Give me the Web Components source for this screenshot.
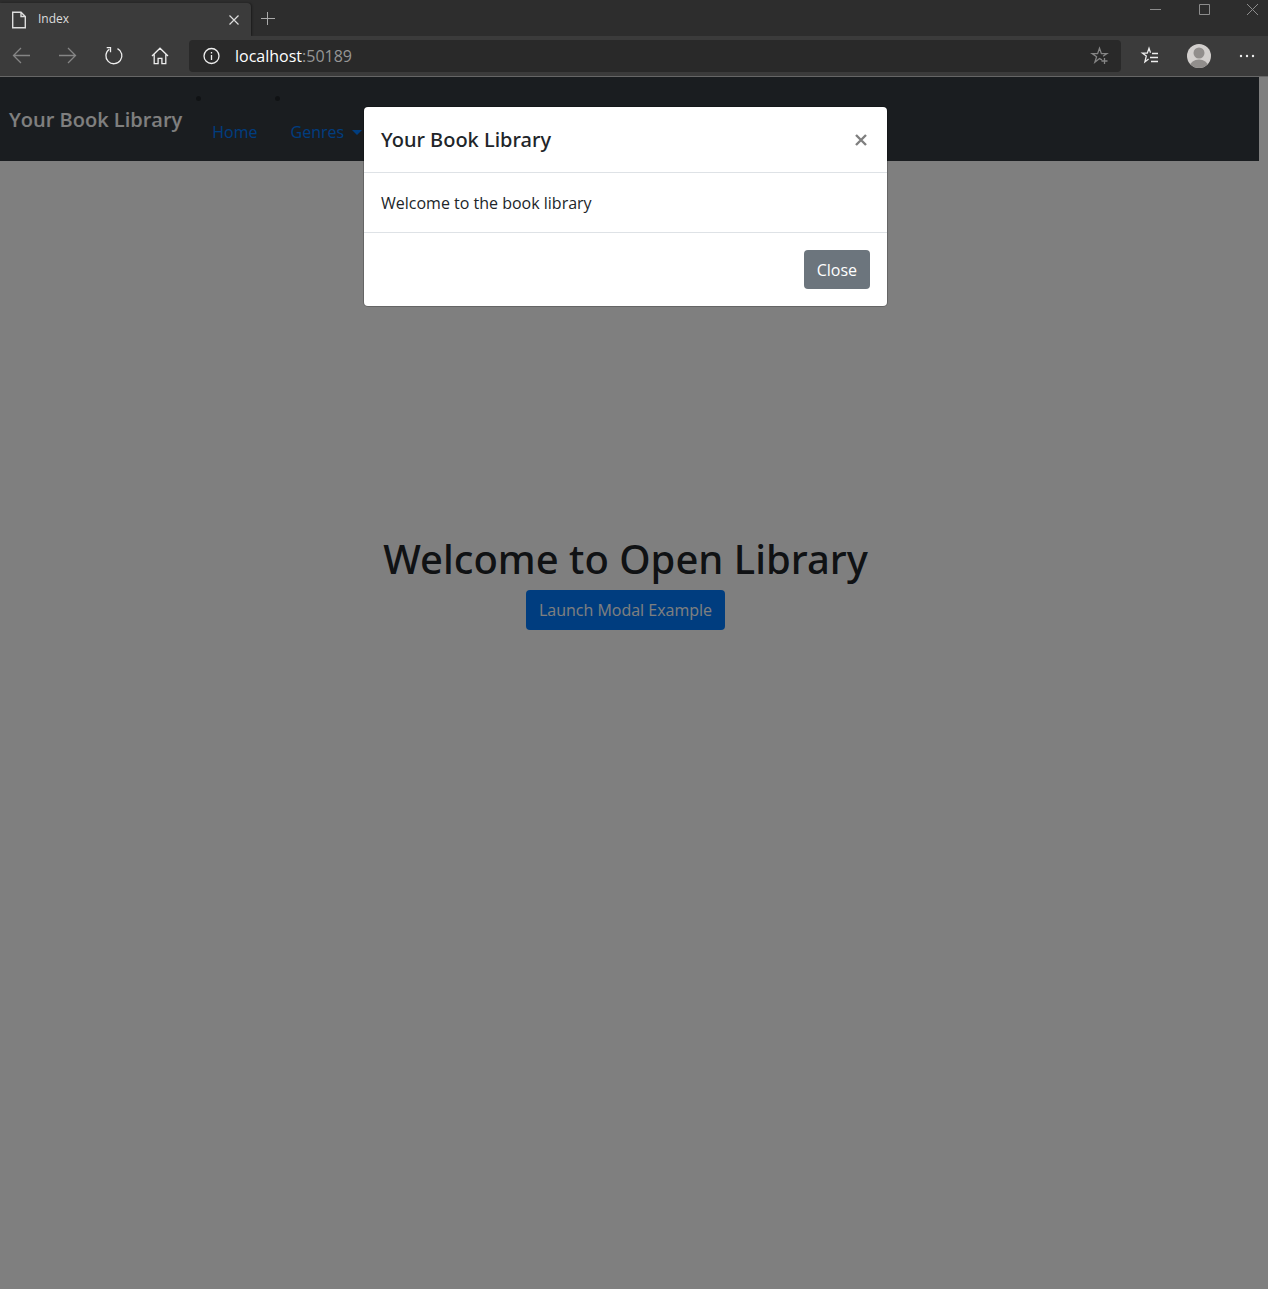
<!DOCTYPE html>
<html lang="en">
<head>
<meta charset="utf-8">
<title>Index</title>
<style>
html, body { height: 100%; margin: 0; }
body { font-family: "Open Sans", "Noto Sans", sans-serif; font-size: 16px; line-height: 25px; color: #212529; background: #fff; --heading: "Noto Sans", "Open Sans", sans-serif; }
</style>
</head>
<body>
<browser-window>
  <tab-strip slot="chrome"></tab-strip>
  <tool-bar slot="chrome"></tool-bar>
  <library-nav></library-nav>
  <library-welcome></library-welcome>
  <library-modal slot="overlay">
    <span slot="title">Your Book Library</span>
    Welcome to the book library
  </library-modal>
</browser-window>
<script>
const define = (name, html) => customElements.define(name, class extends HTMLElement {
  constructor() {
    super();
    this.attachShadow({ mode: "open" }).innerHTML = html;
  }
});

define("browser-window", `
<style>
:host { display: flex; flex-direction: column; min-height: 100%; }
.page { flex: 1; display: flex; flex-direction: column; position: relative; background: #fff; }
</style>
<slot name="chrome"></slot>
<div class="page"><slot></slot><slot name="overlay"></slot></div>`);

define("tab-strip", `
<style>
:host { display: flex; height: 36px; background: #2d2d2d; color: #ddd; font-size: 12px; line-height: 32px; }
button { border: 0; padding: 0; background: none; color: inherit; display: flex; align-items: center; justify-content: center; }
svg { display: block; fill: none; stroke: currentColor; }
.tab { display: flex; align-items: center; box-sizing: border-box; width: 251px; margin-top: 3px; padding: 0 10px 0 11px; background: #3b3b3b; border-radius: 0 4px 0 0; box-shadow: 1px 0 2px #1c1c1c; }
.tab span { flex: 1; margin-left: 11px; padding-bottom: 2px; }
.add { width: 33px; color: #aaa; }
.win { display: flex; margin-left: auto; gap: 36px; padding: 3px 9px 0 0; color: #8c8c8c; align-items: flex-start; }
</style>
<div class="tab">
  <svg width="16" height="18" viewBox="0 0 16 18" stroke="#eee" stroke-width="1.4"><path d="M1.7 1.2h8.3l4.3 4.3v11.3H1.7zM10 1.2v4.3h4.3"/></svg>
  <span>Index</span>
  <button aria-label="Close tab"><svg width="14" height="14" stroke-width="1.2"><path d="M2.5 2.5l9 9M11.5 2.5l-9 9"/></svg></button>
</div>
<button class="add" aria-label="New tab"><svg width="14" height="14"><path d="M0 7.500h14M6.500 1v13"/></svg></button>
<div class="win">
  <button aria-label="Minimize"><svg width="13" height="13"><path d="M2 6.500h11"/></svg></button>
  <button aria-label="Maximize"><svg width="13" height="13"><path d="M2.500 1.500h10v10h-10z"/></svg></button>
  <button aria-label="Close window"><svg width="13" height="13"><path d="M1 1l11 11M12 1L1 12"/></svg></button>
</div>`);

define("tool-bar", `
<style>
:host { display: flex; align-items: center; box-sizing: border-box; height: 41px; padding: 0 12px; background: #3b3b3b; border-bottom: 1px solid #666; color: #eee; }
button { border: 0; padding: 0; background: none; color: inherit; }
svg { display: block; fill: none; stroke: currentColor; stroke-width: 1.3; }
nav { display: flex; gap: 26px; margin-right: 19px; }
.dim { color: #858585; }
.address { flex: 1; display: flex; align-items: center; box-sizing: border-box; height: 32px; padding: 0 11px 0 13px; border-radius: 4px; background: #292929; }
.url { flex: 1; margin-left: 14px; color: #fff; }
.url span { color: #969696; }
.tools { display: flex; align-items: center; gap: 26px; margin-left: 19px; }
</style>
<nav aria-label="Browser">
  <button class="dim" aria-label="Back"><svg width="20" height="20"><path d="M18 9.500H1.500M9 2L1.500 9.500 9 17"/></svg></button>
  <button class="dim" aria-label="Forward"><svg width="20" height="20"><path d="M1 9.500h16.500M10 2l7.500 7.500L10 17"/></svg></button>
  <button aria-label="Refresh"><svg width="20" height="20"><path d="M13.500 2.600A8 8 0 1 1 5.300 3.200M2.700 1.700H6.500v4.500"/></svg></button>
  <button aria-label="Home"><svg width="20" height="20"><path d="M2 10l8-7.800 8 7.800M4.200 8.500v9.200h3.900v-5.300h3.800v5.300h3.900V8.500"/></svg></button>
</nav>
<div class="address">
  <svg width="19" height="18"><circle cx="9.500" cy="9" r="7.500"/><path d="M9.500 8v5M9.500 5v1.500"/></svg>
  <div class="url">localhost<span>:50189</span></div>
  <button class="dim" aria-label="Add to favorites"><svg width="20" height="20"><path d="M12 13.800L9.500 12.600 4.900 16.200l1.700-5.400L2.100 7.600h5.500L9.500 2.300l1.900 5.300h5.500l-3.800 2.700M14.500 12v6M11.500 15h6"/></svg></button>
</div>
<div class="tools">
  <button aria-label="Favorites"><svg width="20" height="20"><path d="M10.500 6.800L9 2.200 7.300 7.200H2.500L6.300 10 4.900 15.900 8.600 13M12 7.500h6M10 11.500h8M11 15.500h7"/></svg></button>
  <button aria-label="Profile"><svg width="26" height="26" style="stroke:none"><defs><clipPath id="c"><circle cx="13" cy="13" r="12"/></clipPath></defs><circle cx="13" cy="13" r="12" fill="#d2cfcd"/><g clip-path="url(#c)" fill="#918e8c"><circle cx="13" cy="10" r="5.500"/><ellipse cx="13" cy="23" rx="9" ry="6.500"/></g></svg></button>
  <button aria-label="Settings and more"><svg width="18" height="20" style="fill:currentColor;stroke:none"><circle cx="3" cy="10" r="1.200"/><circle cx="9" cy="10" r="1.200"/><circle cx="15" cy="10" r="1.200"/></svg></button>
</div>`);

define("library-nav", `
<style>
:host { display: flex; align-items: center; box-sizing: border-box; height: 84px; margin-right: 9px; padding-left: 9px; background: #343a40; }
a { text-decoration: none; color: #007bff; }
.brand { font-size: 20px; font-weight: 600; color: #fff; }
ul { align-self: flex-start; display: flex; list-style: none; margin: 0 0 0 13px; padding: 19px 0 0; }
li { display: flex; flex-direction: column; gap: 14px; }
li::before { content: ""; width: 5px; height: 5px; margin-left: 1px; border-radius: 50%; background: #212529; }
li a { display: flex; align-items: center; gap: 8px; padding: 5px 16px 8px 17px; }
i { border: 5px solid transparent; border-top-color: #007bff; border-bottom: 0; }
</style>
<a class="brand" href="#">Your Book Library</a>
<ul>
  <li><a href="#">Home</a></li>
  <li><a href="#">Genres<i></i></a></li>
</ul>`);

define("library-welcome", `
<style>
:host { flex: 1; display: flex; flex-direction: column; align-items: center; padding: 373px 17px 0 0; }
h1 { margin: 0 0 6px; font-family: var(--heading); font-size: 40px; line-height: 50px; font-weight: 500; }
button { border: 0; border-radius: 4px; padding: 8px 13px 7px; background: #007bff; color: #fff; font: inherit; }
</style>
<h1>Welcome to Open Library</h1>
<button>Launch Modal Example</button>`);

define("library-modal", `
<style>
:host { position: absolute; inset: 0; display: flex; justify-content: center; align-items: flex-start; padding: 30px 17px 0 0; background: rgba(0, 0, 0, .5); }
[role=dialog] { width: 523px; background: #fff; border-radius: 4px; box-shadow: 0 0 0 1px rgba(0, 0, 0, .2); }
header { display: flex; justify-content: space-between; align-items: center; padding: 17px; border-bottom: 1px solid #dee2e6; }
h2 { margin: 0; font-family: var(--heading); font-size: 20px; line-height: 31px; font-weight: 500; }
button { border: 0; font: inherit; }
.x { padding: 0; background: none; color: #7f7f7f; }
.x svg { display: block; fill: none; stroke: currentColor; stroke-width: 2.400; }
.body { padding: 18px 17px 16px; border-bottom: 1px solid #dee2e6; }
footer { display: flex; justify-content: flex-end; padding: 17px; }
footer button { padding: 8px 13px 6px; border-radius: 4px; background: #6c757d; color: #fff; }
</style>
<div role="dialog" aria-modal="true" aria-labelledby="t">
  <header><h2 id="t"><slot name="title"></slot></h2>
    <button class="x" aria-label="Close"><svg width="18" height="16"><path d="M4 3l10 10M14 3L4 13"/></svg></button></header>
  <div class="body"><slot></slot></div>
  <footer><button>Close</button></footer>
</div>`);
</script>
</body>
</html>
